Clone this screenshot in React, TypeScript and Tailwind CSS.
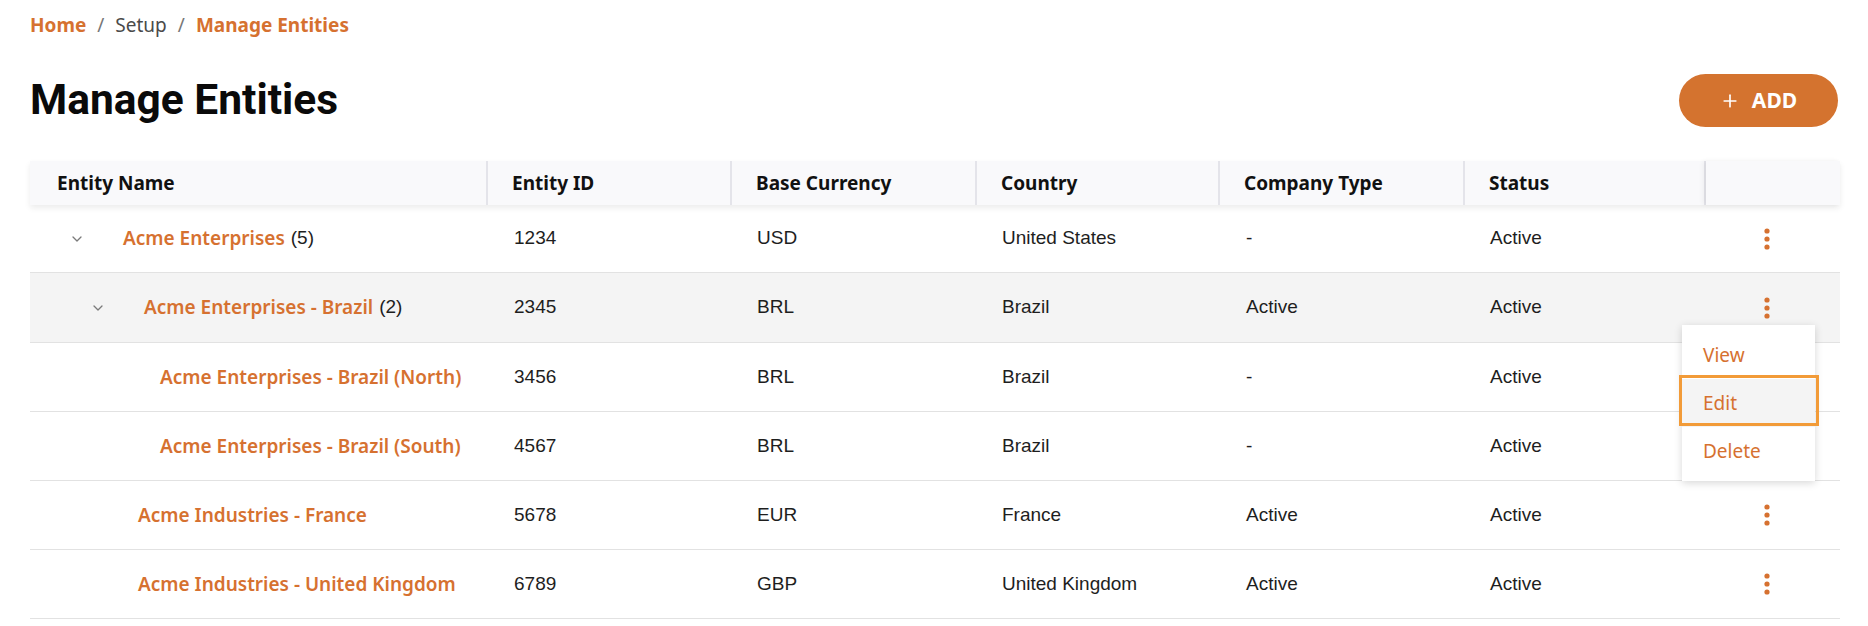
import { Plus } from "lucide-react";

type Row = {
  name: string;
  count?: number;
  id: string;
  currency: string;
  country: string;
  type: string;
  status: string;
  chevron: boolean;
  pad: string;
  h: string;
  active?: boolean;
  menu?: boolean;
};

const ROWS: Row[] = [
  { name: "Acme Enterprises", count: 5, id: "1234", currency: "USD", country: "United States", type: "-", status: "Active", chevron: true, pad: "pl-[42px]", h: "h-[68px]" },
  { name: "Acme Enterprises - Brazil", count: 2, id: "2345", currency: "BRL", country: "Brazil", type: "Active", status: "Active", chevron: true, pad: "pl-[63px]", h: "h-[70px]", active: true, menu: true },
  { name: "Acme Enterprises - Brazil (North)", id: "3456", currency: "BRL", country: "Brazil", type: "-", status: "Active", chevron: false, pad: "pl-[130px]", h: "h-[69px]" },
  { name: "Acme Enterprises - Brazil (South)", id: "4567", currency: "BRL", country: "Brazil", type: "-", status: "Active", chevron: false, pad: "pl-[130px]", h: "h-[69px]" },
  { name: "Acme Industries - France", id: "5678", currency: "EUR", country: "France", type: "Active", status: "Active", chevron: false, pad: "pl-[108px]", h: "h-[69px]" },
  { name: "Acme Industries - United Kingdom", id: "6789", currency: "GBP", country: "United Kingdom", type: "Active", status: "Active", chevron: false, pad: "pl-[108px]", h: "h-[69px]" },
];

const HEADERS = ["Entity Name", "Entity ID", "Base Currency", "Country", "Company Type", "Status"];

const GRID = "grid grid-cols-[458px_244px_245px_243px_245px_241px_134px]";

function Chevron() {
  return (
    <svg width="10" height="6" viewBox="0 0 10 6" fill="none" className="shrink-0">
      <polyline points="1,1 5,5 9,1" stroke="#7a7a7a" strokeWidth="1.3" strokeLinecap="round" strokeLinejoin="round" />
    </svg>
  );
}

function Kebab() {
  return (
    <svg width="6" height="22" viewBox="0 0 6 22" fill="#d67130">
      <circle cx="3" cy="3" r="2.6" />
      <circle cx="3" cy="11" r="2.6" />
      <circle cx="3" cy="19" r="2.6" />
    </svg>
  );
}

function ActionMenu() {
  return (
    <div className="absolute left-[-24px] top-[52px] z-20 w-[133px] bg-white py-[6px] shadow-[0_2px_8px_rgba(0,0,0,0.16)] font-['Noto_Sans',sans-serif] text-[19px] text-[#d67130]">
      <div className="flex h-[48px] items-center px-[21px]">View</div>
      <div className="relative flex h-[48px] items-center bg-[#f4f4f4] px-[21px]">
        <span className="absolute -left-[3px] -right-[4px] -top-[4px] bottom-[1px] border-[3px] border-[#f29b38]" />
        <span className="relative">Edit</span>
      </div>
      <div className="flex h-[48px] items-center px-[21px]">Delete</div>
    </div>
  );
}

export default function App() {
  return (
    <div className="min-h-screen bg-white px-[30px] pt-[12px]">
      {/* Breadcrumb */}
      <nav className="flex h-[26px] items-center gap-[11px] font-['Noto_Sans',sans-serif] text-[19px]">
        <span className="font-bold text-[#d67130]">Home</span>
        <span className="text-[#777]">/</span>
        <span className="text-[#4a4a4a]">Setup</span>
        <span className="text-[#777]">/</span>
        <span className="font-bold text-[#d67130]">Manage Entities</span>
      </nav>

      {/* Title row */}
      <div className="mt-[36px] flex h-[53px] items-center justify-between">
        <h1 className="font-['Roboto',sans-serif] text-[42.5px] font-bold leading-none text-[#0a0a0a]">Manage Entities</h1>
        <button className="flex h-[53px] w-[159px] items-center justify-center gap-[12px] rounded-full bg-[#d4732f] font-['Noto_Sans',sans-serif] text-[21px] font-bold text-white">
          <Plus size={20} strokeWidth={2} />
          <span>ADD</span>
        </button>
      </div>

      {/* Table */}
      <div className="mt-[34px] w-[1810px]">
        <div className={`${GRID} relative z-10 h-[44px] bg-[#f9f9fb] shadow-[0_3px_6px_rgba(0,0,0,0.08)] font-['Noto_Sans',sans-serif] text-[19px] font-bold text-[#111]`}>
          {HEADERS.map((h, i) => (
            <div key={h} className={`flex items-center border-r-2 border-[#e4e4ea] ${i === 0 ? "pl-[27px]" : "pl-[24px]"}`}>
              {h}
            </div>
          ))}
          <div className="bg-[#f9f9fb] shadow-[-3px_0_5px_rgba(0,0,0,0.05)]" />
        </div>

        {ROWS.map((r) => (
          <div
            key={r.id}
            className={`${GRID} ${r.h} border-b border-[#e2e2e2] font-['Liberation_Sans',Arial,sans-serif] text-[19px] text-[#1e1e1e] ${r.active ? "bg-[#f4f4f4]" : "bg-white"}`}
          >
            <div className={`flex items-center ${r.pad}`}>
              {r.chevron && (
                <span className="mr-[41px] flex">
                  <Chevron />
                </span>
              )}
              <span className="font-['Noto_Sans',sans-serif] font-semibold text-[#d67130]">{r.name}</span>
              {r.count !== undefined && <span className="ml-[6px]">({r.count})</span>}
            </div>
            <div className="flex items-center pl-[26px]">{r.id}</div>
            <div className="flex items-center pl-[25px]">{r.currency}</div>
            <div className="flex items-center pl-[25px]">{r.country}</div>
            <div className="flex items-center pl-[26px]">{r.type}</div>
            <div className="flex items-center pl-[25px]">{r.status}</div>
            <div className="relative flex items-center pl-[58px]">
              <Kebab />
              {r.menu && <ActionMenu />}
            </div>
          </div>
        ))}
      </div>
    </div>
  );
}
